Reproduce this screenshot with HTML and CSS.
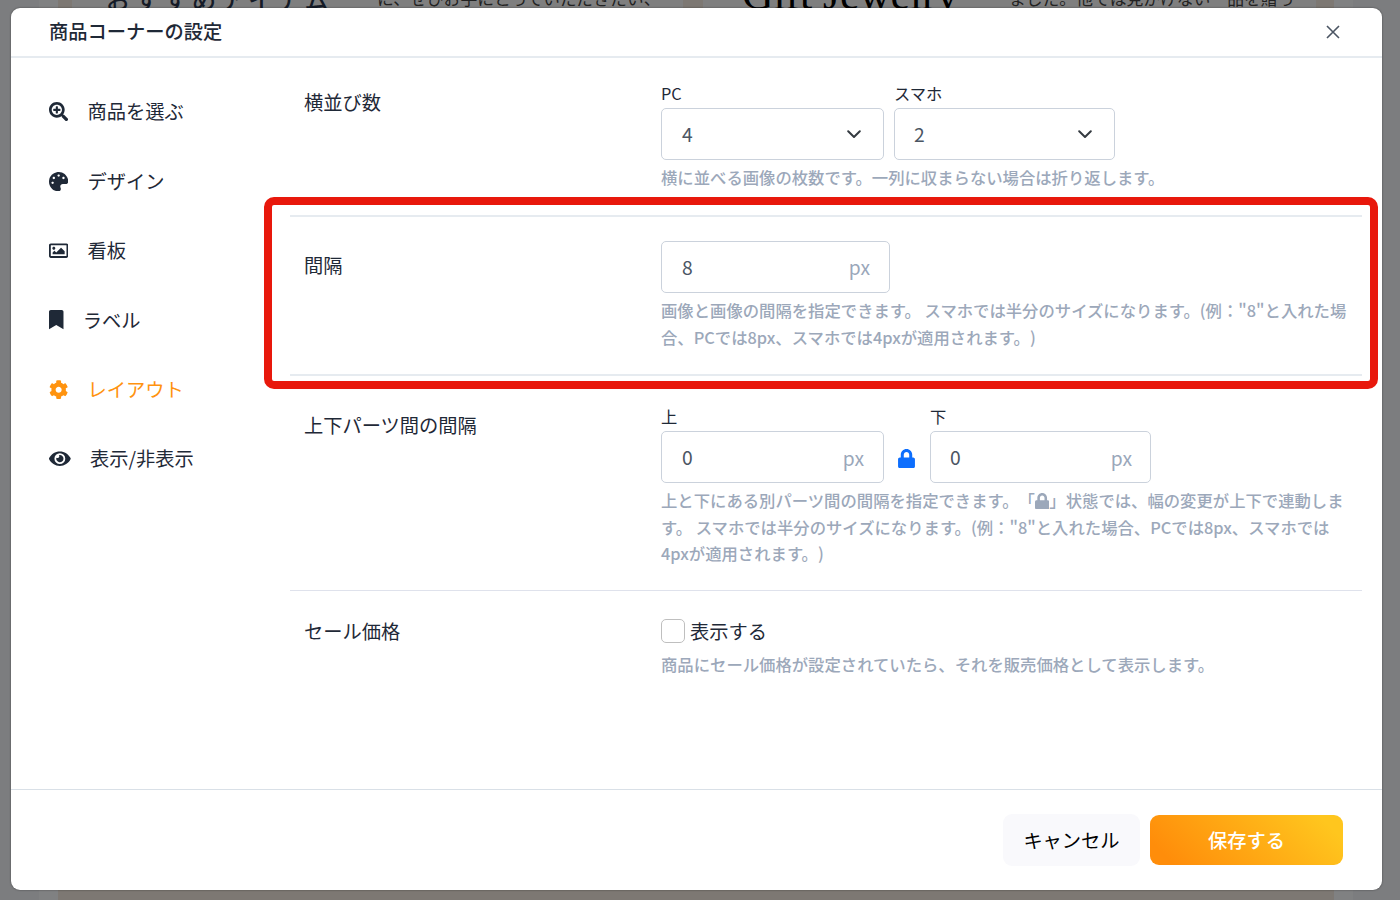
FILE: index.html
```html
<!DOCTYPE html>
<html lang="ja">
<head>
<meta charset="utf-8">
<title>商品コーナーの設定</title>
<link rel="stylesheet" href="styles.css">
</head>
<body>
<svg class="defs" width="0" height="0">
  <symbol id="lock" viewBox="0 0 448 512"><path d="M400 224h-24v-72C376 68.2 307.8 0 224 0S72 68.2 72 152v72H48c-26.5 0-48 21.5-48 48v192c0 26.5 21.5 48 48 48h352c26.5 0 48-21.5 48-48V272c0-26.5-21.5-48-48-48zm-104 0H152v-72c0-39.7 32.3-72 72-72s72 32.3 72 72v72z"/></symbol>
</svg>
<div class="screen">
  <div class="page">
    <div class="paper">
      <div class="card card-first">
        <span class="card-heading">おすすめアイテム</span>
        <span class="card-copy">に、ぜひお手にとっていただきたい、</span>
      </div>
      <div class="card card-second">
        <span class="card-brand">Gift Jewelry</span>
        <span class="card-copy">ました。他では見かけない一品を贈っ</span>
      </div>
    </div>
  </div>

  <section class="modal">
    <header class="modal-header">
      <h1 class="modal-title">商品コーナーの設定</h1>
      <svg class="close" viewBox="0 0 14 14"><path d="M1 1l12 12M13 1L1 13"/></svg>
    </header>

    <div class="modal-body">
      <nav class="menu">
        <a class="menu-item"><svg class="icon" viewBox="0 0 512 512"><path d="M304 192v32c0 6.600-5.400 12-12 12h-56v56c0 6.600-5.400 12-12 12h-32c-6.600 0-12-5.400-12-12v-56h-56c-6.600 0-12-5.400-12-12v-32c0-6.600 5.400-12 12-12h56v-56c0-6.600 5.400-12 12-12h32c6.600 0 12 5.400 12 12v56h56c6.600 0 12 5.400 12 12zm201 284.700L476.700 505c-9.400 9.400-24.600 9.400-33.900 0L343 405.300c-4.500-4.500-7-10.600-7-17V372c-35.300 27.600-79.700 44-128 44C93.100 416 0 322.900 0 208S93.100 0 208 0s208 93.100 208 208c0 48.300-16.400 92.700-44 128h16.300c6.400 0 12.500 2.500 17 7l99.700 99.700c9.300 9.400 9.300 24.600 0 34zM344 208c0-75.200-60.800-136-136-136S72 132.800 72 208s60.800 136 136 136 136-60.800 136-136z"/></svg>商品を選ぶ</a>
        <a class="menu-item"><svg class="icon" viewBox="0 0 512 512"><path d="M204.300 5C104.900 24.400 24.800 104.300 5.200 203.400c-37 187 131.700 326.400 258.800 306.700 41.200-6.400 61.400-54.600 42.500-91.700-23.100-45.400 9.900-98.400 60.900-98.400h79.700c35.800 0 64.800-29.600 64.900-65.300C511.500 97.100 368.100-26.900 204.300 5zM96 320c-17.700 0-32-14.300-32-32s14.300-32 32-32 32 14.300 32 32-14.300 32-32 32zm32-128c-17.700 0-32-14.300-32-32s14.300-32 32-32 32 14.300 32 32-14.300 32-32 32zm128-64c-17.700 0-32-14.300-32-32s14.300-32 32-32 32 14.300 32 32-14.300 32-32 32zm128 64c-17.700 0-32-14.300-32-32s14.300-32 32-32 32 14.300 32 32-14.300 32-32 32z"/></svg>デザイン</a>
        <a class="menu-item"><svg class="icon" viewBox="0 0 512 512"><path d="M464 64H48C21.490 64 0 85.490 0 112v288c0 26.510 21.490 48 48 48h416c26.510 0 48-21.490 48-48V112c0-26.510-21.490-48-48-48zm-6 336H54a6 6 0 0 1-6-6V118a6 6 0 0 1 6-6h404a6 6 0 0 1 6 6v276a6 6 0 0 1-6 6zM128 152c-22.091 0-40 17.909-40 40s17.909 40 40 40 40-17.909 40-40-17.909-40-40-40zM96 352h320v-80l-87.515-87.515c-4.686-4.686-12.284-4.686-16.971 0L192 304l-39.515-39.515c-4.686-4.686-12.284-4.686-16.971 0L96 304v48z"/></svg>看板</a>
        <a class="menu-item"><svg class="icon icon-narrow" viewBox="0 0 384 512"><path d="M0 512V48C0 21.490 21.490 0 48 0h288c26.510 0 48 21.490 48 48v464L192 400 0 512z"/></svg>ラベル</a>
        <a class="menu-item menu-item-active"><svg class="icon" viewBox="0 0 512 512"><path d="M487.400 315.700l-42.600-24.600c4.300-23.200 4.300-47 0-70.200l42.600-24.600c4.900-2.800 7.100-8.600 5.500-14-11.100-35.600-30-67.800-54.700-94.600-3.800-4.100-10-5.100-14.800-2.300L380.800 110c-17.900-15.400-38.500-27.300-60.800-35.100V25.800c0-5.600-3.900-10.500-9.400-11.700-36.700-8.200-74.300-7.800-109.200 0-5.500 1.200-9.400 6.100-9.400 11.700V75c-22.200 7.900-42.800 19.800-60.800 35.100L88.700 85.500c-4.900-2.800-11-1.900-14.800 2.300-24.700 26.700-43.600 58.900-54.700 94.600-1.700 5.400.6 11.200 5.500 14L67.300 221c-4.300 23.200-4.300 47 0 70.200l-42.600 24.600c-4.900 2.800-7.100 8.600-5.500 14 11.100 35.600 30 67.800 54.700 94.600 3.800 4.100 10 5.100 14.800 2.300l42.600-24.600c17.900 15.400 38.500 27.300 60.800 35.100v49.200c0 5.600 3.900 10.500 9.400 11.700 36.700 8.200 74.300 7.800 109.200 0 5.500-1.200 9.400-6.100 9.400-11.700v-49.200c22.200-7.900 42.800-19.800 60.800-35.100l42.600 24.600c4.900 2.800 11 1.900 14.800-2.300 24.700-26.700 43.600-58.900 54.700-94.600 1.500-5.500-.7-11.300-5.600-14.100zM256 336c-44.100 0-80-35.900-80-80s35.900-80 80-80 80 35.900 80 80-35.900 80-80 80z"/></svg>レイアウト</a>
        <a class="menu-item"><svg class="icon icon-wide" viewBox="0 0 576 512"><path d="M572.520 241.400C518.290 135.590 410.930 64 288 64S57.680 135.640 3.480 241.410a32.350 32.350 0 0 0 0 29.190C57.710 376.410 165.070 448 288 448s230.320-71.640 284.520-177.410a32.350 32.350 0 0 0 0-29.190zM288 400a144 144 0 1 1 144-144 143.930 143.930 0 0 1-144 144zm0-240a95.310 95.310 0 0 0-25.310 3.790 47.850 47.850 0 0 1-66.900 66.900A95.780 95.780 0 1 0 288 160z"/></svg>表示/非表示</a>
      </nav>

      <div class="settings">
        <div class="row row-columns">
          <div class="row-label">横並び数</div>
          <div class="row-field">
            <div class="controls">
              <div class="control">
                <div class="caption">PC</div>
                <div class="box box-top"><span>4</span><svg class="chevron" viewBox="0 0 14 9"><path d="M1.200 1.300L7 7l5.800-5.700"/></svg></div>
              </div>
              <div class="control control-next">
                <div class="caption">スマホ</div>
                <div class="box box-bottom"><span>2</span><svg class="chevron" viewBox="0 0 14 9"><path d="M1.200 1.300L7 7l5.800-5.700"/></svg></div>
              </div>
            </div>
            <p class="help">横に並べる画像の枚数です。一列に収まらない場合は折り返します。</p>
          </div>
        </div>

        <div class="row row-gap">
          <div class="row-label">間隔</div>
          <div class="row-field">
            <div class="box box-wide"><span>8</span><span class="unit">px</span></div>
            <p class="help">画像と画像の間隔を指定できます。 スマホでは半分のサイズになります。(例："8"と入れた場<br>合、PCでは8px、スマホでは4pxが適用されます。)</p>
          </div>
          <div class="highlight"></div>
        </div>

        <div class="row row-parts">
          <div class="row-label">上下パーツ間の間隔</div>
          <div class="row-field">
            <div class="controls">
              <div class="control">
                <div class="caption">上</div>
                <div class="box box-top"><span>0</span><span class="unit">px</span></div>
              </div>
              <svg class="link-lock"><use href="#lock"/></svg>
              <div class="control">
                <div class="caption">下</div>
                <div class="box box-bottom box-end"><span>0</span><span class="unit">px</span></div>
              </div>
            </div>
            <p class="help">上と下にある別パーツ間の間隔を指定できます。「<svg class="text-lock"><use href="#lock"/></svg>」状態では、幅の変更が上下で連動しま<br>す。 スマホでは半分のサイズになります。(例："8"と入れた場合、PCでは8px、スマホでは<br>4pxが適用されます。)</p>
          </div>
        </div>

        <div class="row row-sale">
          <div class="row-label">セール価格</div>
          <div class="row-field">
            <div class="check"><span class="checkbox"></span>表示する</div>
            <p class="help">商品にセール価格が設定されていたら、それを販売価格として表示します。</p>
          </div>
        </div>
      </div>
    </div>

    <footer class="modal-footer">
      <div class="button button-cancel">キャンセル</div>
      <div class="button button-save">保存する</div>
    </footer>
  </section>
</div>
</body>
</html>
```
FILE: styles.css
```css
* { box-sizing: border-box; }
body {
  margin: 0;
  font-family: "Noto Sans CJK JP", "Noto Sans", sans-serif;
  font-size: 19.25px;
  color: #1f2937;
  text-spacing-trim: space-all;
}
.defs { display: block; width: 0; height: 0; }
.screen {
  display: grid;
  width: 1400px;
  height: 900px;
  overflow: hidden;
  background: #7c7d7f;
}

/* Dimmed page behind the dialog */
.page {
  grid-area: 1 / 1;
  height: 900px;
  margin: 0 47px 0 39px;
  padding: 0 19px;
  background: #808182;
  overflow: hidden;
}
.paper {
  display: flex;
  gap: 20px;
  height: 100%;
  padding: 0 18px 0 14px;
  background: #7d7873;
}
.card {
  display: flex;
  align-items: flex-start;
  height: 12px;
  background: #7f7f7f;
  white-space: nowrap;
}
.card-first { width: 611px; padding-left: 34px; }
.card-second { flex: 1; padding-left: 39px; }
.card-heading {
  width: 271px;
  margin-top: -15px;
  font-size: 24px;
  line-height: 28px;
  font-weight: 500;
  letter-spacing: 4.7px;
  color: #151b27;
}
.card-copy {
  margin-top: -14px;
  font-size: 16.8px;
  line-height: 24px;
  color: #222;
}
.card-brand {
  width: 267px;
  margin-top: -27px;
  font-family: "Liberation Serif", serif;
  font-size: 43.5px;
  line-height: 42px;
  color: #000;
}

.modal {
  grid-area: 1 / 1;
  display: flex;
  flex-direction: column;
  width: 1371px;
  height: 882px;
  margin: 8px 0 0 11px;
  border-radius: 9px;
  background: #fff;
  box-shadow: 0 0 2px rgba(0, 0, 0, .5);
  z-index: 1;
}
.modal-header {
  display: flex;
  align-items: center;
  justify-content: space-between;
  height: 50px;
  padding: 0 42px 2px 38px;
  border-bottom: 2px solid #e6ebf0;
}
.modal-title { margin: 0; font-size: 19.25px; line-height: 28px; font-weight: 500; }
.close { width: 14px; height: 14px; margin-top: 2px; fill: none; stroke: #4b5563; stroke-width: 1.6; }

.modal-body { display: flex; flex: 1; }
.menu { width: 279px; padding: 19px 0 0 38px; }
.menu-item { display: flex; align-items: center; gap: 19.3px; height: 69.45px; line-height: 26px; padding-bottom: 1px; }
.menu-item .icon { margin-top: 1px; }
.menu-item-active { color: #ff930f; }
.icon { width: 19.3px; height: 19.3px; fill: currentColor; }
.icon-narrow { width: 14.5px; }
.icon-wide { width: 21.7px; }

.settings { width: 1072px; }
.row { display: flex; padding-left: 14px; border-bottom: 2px solid #e6ebf0; }
.row-label { width: 357px; line-height: 28px; }
.row-columns { height: 159px; padding-top: 22px; }
.row-columns .row-label { padding-top: 8px; }
.row-gap { position: relative; height: 159px; padding-top: 24px; }
.row-gap .row-label { padding-top: 10px; }
.row-parts { height: 215px; padding-top: 27px; border-bottom-width: 1px; border-color: #dfe2ec; }
.row-parts .row-label { padding-top: 8px; }
.row-sale { height: 120px; padding-top: 26px; border: 0; }

.controls { display: flex; }
.control-next { margin-left: 10px; }
.caption { height: 28px; font-size: 16.3px; line-height: 26px; }
.box {
  display: flex;
  align-items: center;
  justify-content: space-between;
  width: 223px;
  height: 52px;
  padding: 0 22px 0 20px;
  border: 1px solid #cbd2dc;
  border-radius: 5px;
  color: #4b5563;
}
.box-bottom { width: 221px; padding-left: 19px; }
.box-end { padding-right: 21px; }
.box-wide { width: 229px; padding-bottom: 1px; }
.unit { padding: 1px 0 0; margin-right: -3px; color: #9aa7ba; }
.chevron { width: 14px; height: 9px; fill: none; stroke: #343a40; stroke-width: 2; stroke-linecap: round; stroke-linejoin: round; }
.link-lock { width: 17px; height: 19.3px; margin: 46px 15px 0 14px; fill: #0d6efd; }
.text-lock { width: 14.4px; height: 16.4px; vertical-align: -2px; fill: currentColor; }
.help {
  margin: 4px 0 0;
  font-size: 16.35px;
  line-height: 26.6px;
  font-weight: 500;
  color: #9ca8ba;
  white-space: nowrap;
}
.check { display: flex; align-items: center; gap: 5px; height: 28px; margin-bottom: 6px; }
.checkbox { width: 24px; height: 24px; border: 1px solid #bfbfbf; border-radius: 5px; }

.highlight {
  position: absolute;
  left: -26px;
  top: -20px;
  width: 1114px;
  height: 192px;
  border: 8px solid #e8180c;
  border-radius: 10px;
}

.modal-footer {
  display: flex;
  align-items: center;
  justify-content: flex-end;
  gap: 10px;
  height: 101px;
  padding-right: 39px;
  border-top: 1px solid #d9e0e7;
}
.button { display: flex; align-items: center; justify-content: center; border-radius: 9px; }
.button-cancel { width: 137px; height: 52px; background: #f9f9fc; color: #000; }
.button-save {
  width: 193px;
  height: 50px;
  background: linear-gradient(45deg, #ff8d0a 10%, #ffc61e 90%);
  color: #fff;
  font-weight: 500;
}
```
